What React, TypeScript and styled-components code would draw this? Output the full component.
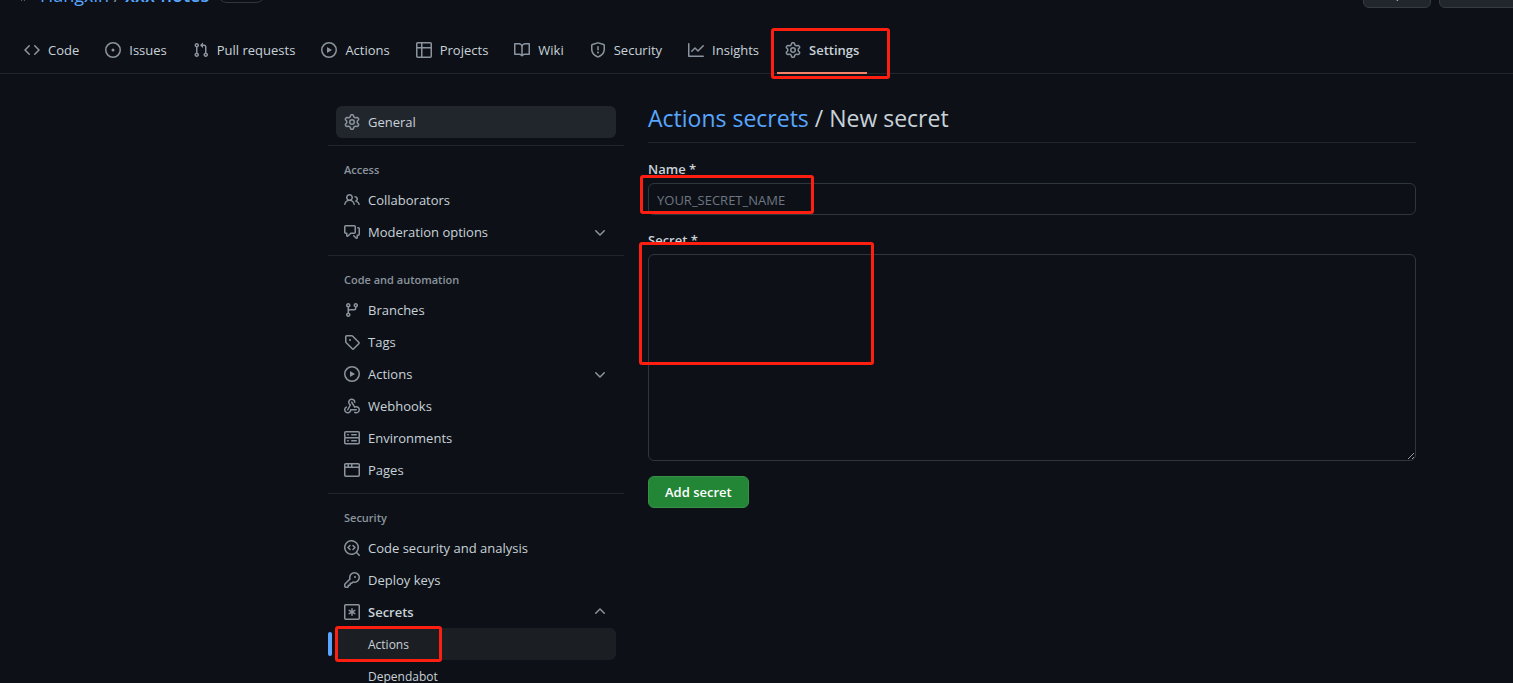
import React from "react";
import styled, { createGlobalStyle, css } from "styled-components";

const GlobalStyle = createGlobalStyle`
  *, *::before, *::after { box-sizing: border-box; }
  html { background: #0d1117; color-scheme: dark; }
  body {
    margin: 0;
    height: 100vh;
    overflow: hidden;
    background: #0d1117;
    color: #c9d1d9;
    font-family: "Segoe UI", "Open Sans", "Noto Sans", sans-serif;
    font-size: 13px;
    line-height: 20px;
  }
  a { color: inherit; text-decoration: none; }
`;

const paths = {
  code: "M4.72 3.22a.75.75 0 011.06 1.06L2.06 8l3.72 3.72a.75.75 0 11-1.06 1.06L.47 8.53a.75.75 0 010-1.06l4.25-4.25zm6.56 0a.75.75 0 10-1.06 1.06L13.94 8l-3.72 3.72a.75.75 0 101.06 1.06l4.25-4.25a.75.75 0 000-1.06l-4.25-4.25z",
  issue: "M8 9.5a1.5 1.5 0 100-3 1.5 1.5 0 000 3zM8 0a8 8 0 100 16A8 8 0 008 0zM1.5 8a6.5 6.5 0 1113 0 6.5 6.5 0 01-13 0z",
  pull: "M7.177 3.073L9.573.677A.25.25 0 0110 .854v4.792a.25.25 0 01-.427.177L7.177 3.427a.25.25 0 010-.354zM3.75 2.5a.75.75 0 100 1.5.75.75 0 000-1.5zm-2.25.75a2.25 2.25 0 113 2.122v5.256a2.251 2.251 0 11-1.5 0V5.372A2.25 2.25 0 011.5 3.25zM11 2.5h-1V4h1a1 1 0 011 1v5.628a2.251 2.251 0 101.5 0V5A2.5 2.5 0 0011 2.5zm1 10.25a.75.75 0 111.5 0 .75.75 0 01-1.5 0zM3.75 12a.75.75 0 100 1.5.75.75 0 000-1.5z",
  play: "M1.5 8a6.5 6.5 0 1113 0 6.5 6.5 0 01-13 0zM8 0a8 8 0 100 16A8 8 0 008 0zM6.379 5.227A.25.25 0 006 5.442v5.117a.25.25 0 00.379.214l4.264-2.559a.25.25 0 000-.428L6.379 5.227z",
  table: "M1.75 0h12.5C15.216 0 16 .784 16 1.75v12.5A1.75 1.75 0 0114.25 16H1.75A1.75 1.75 0 010 14.25V1.75C0 .784.784 0 1.75 0zM1.5 6.5v7.75c0 .138.112.25.25.25H5v-8H1.5zM6.5 6.5v8h7.75a.25.25 0 00.25-.25V6.5h-8zM14.5 5V1.75a.25.25 0 00-.25-.25H6.5V5h8zM5 5V1.5H1.75a.25.25 0 00-.25.25V5H5z",
  book: "M0 1.75A.75.75 0 01.75 1h4.253c1.227 0 2.317.59 3 1.501A3.744 3.744 0 0111.006 1h4.245a.75.75 0 01.75.75v10.5a.75.75 0 01-.75.75h-4.507a2.25 2.25 0 00-1.591.659l-.622.621a.75.75 0 01-1.06 0l-.622-.621A2.25 2.25 0 005.258 13H.75a.75.75 0 01-.75-.75V1.75zm8.755 3a2.25 2.25 0 012.25-2.25H14.5v9h-3.757c-.71 0-1.4.201-1.992.572l.004-7.322zm-1.504 7.324l.004-5.073-.002-2.253A2.25 2.25 0 005.003 2.5H1.5v9h3.757a3.75 3.75 0 011.994.574z",
  shield: "M7.467.133a1.75 1.75 0 011.066 0l5.25 1.68A1.75 1.75 0 0115 3.48V7c0 1.566-.32 3.182-1.303 4.682-.983 1.498-2.585 2.813-5.032 3.855a1.7 1.7 0 01-1.33 0c-2.447-1.042-4.049-2.357-5.032-3.855C1.32 10.182 1 8.566 1 7V3.48a1.75 1.75 0 011.217-1.667l5.25-1.68zm.61 1.429a.25.25 0 00-.153 0l-5.25 1.68a.25.25 0 00-.174.238V7c0 1.358.275 2.666 1.057 3.86.784 1.194 2.121 2.34 4.366 3.297a.2.2 0 00.154 0c2.245-.956 3.582-2.104 4.366-3.298C13.225 9.666 13.5 8.36 13.5 7V3.48a.25.25 0 00-.174-.237l-5.25-1.68zM9 10.5a1 1 0 11-2 0 1 1 0 012 0zm-.25-5.75a.75.75 0 10-1.5 0v3a.75.75 0 001.5 0v-3z",
  graph: "M1.5 1.75a.75.75 0 00-1.5 0v12.5c0 .414.336.75.75.75h14.5a.75.75 0 000-1.5H1.5V1.75zm14.28 2.53a.75.75 0 00-1.06-1.06L10 7.94 7.53 5.47a.75.75 0 00-1.06 0L3.22 8.72a.75.75 0 001.06 1.06L7 7.06l2.47 2.47a.75.75 0 001.06 0l5.25-5.25z",
  gear: "M7.429 1.525a6.593 6.593 0 011.142 0c.036.003.108.036.137.146l.289 1.105c.147.56.55.967.997 1.189.174.086.341.183.501.29.417.278.97.423 1.53.27l1.102-.303c.11-.03.175.016.195.046.219.31.41.641.573.989.014.031.022.11-.059.19l-.815.806c-.411.406-.562.957-.53 1.456a4.588 4.588 0 010 .582c-.032.499.119 1.05.53 1.456l.815.806c.08.08.073.159.059.19a6.494 6.494 0 01-.573.99c-.02.029-.086.074-.195.045l-1.103-.303c-.559-.153-1.112-.008-1.529.27-.16.107-.327.204-.5.29-.449.222-.851.628-.998 1.189l-.289 1.105c-.029.11-.101.143-.137.146a6.613 6.613 0 01-1.142 0c-.036-.003-.108-.037-.137-.146l-.289-1.105c-.147-.56-.55-.967-.997-1.189a4.502 4.502 0 01-.501-.29c-.417-.278-.97-.423-1.53-.27l-1.102.303c-.11.03-.175-.016-.195-.046a6.492 6.492 0 01-.573-.989c-.014-.031-.022-.11.059-.19l.815-.806c.411-.406.562-.957.53-1.456a4.587 4.587 0 010-.582c.032-.499-.119-1.05-.53-1.456l-.815-.806c-.08-.08-.073-.159-.059-.19a6.44 6.44 0 01.573-.99c.02-.029.086-.075.195-.045l1.103.303c.559.153 1.112.008 1.529-.27.16-.107.327-.204.5-.29.449-.222.851-.628.998-1.189l.289-1.105c.029-.11.101-.143.137-.146zM8 0c-.236 0-.47.01-.701.03-.743.065-1.29.615-1.458 1.261l-.29 1.106c-.017.066-.078.158-.211.224a5.994 5.994 0 00-.668.386c-.123.082-.233.09-.3.071L3.27 2.776c-.644-.177-1.392.02-1.82.63a7.977 7.977 0 00-.704 1.217c-.315.675-.111 1.422.363 1.891l.815.806c.05.048.098.147.088.294a6.084 6.084 0 000 .772c.01.147-.038.246-.088.294l-.815.806c-.474.469-.678 1.216-.363 1.891.2.428.436.835.704 1.218.428.609 1.176.806 1.82.63l1.103-.303c.066-.019.176-.011.299.071.213.143.436.272.668.386.133.066.194.158.212.224l.289 1.106c.169.646.715 1.196 1.458 1.26a8.094 8.094 0 001.402 0c.743-.064 1.29-.614 1.458-1.26l.29-1.106c.017-.066.078-.158.211-.224a5.98 5.98 0 00.668-.386c.123-.082.233-.09.3-.071l1.102.302c.644.177 1.392-.02 1.82-.63.268-.382.505-.789.704-1.217.315-.675.111-1.422-.364-1.891l-.814-.806c-.05-.048-.098-.147-.088-.294a6.1 6.1 0 000-.772c-.01-.147.039-.246.088-.294l.814-.806c.475-.469.679-1.216.364-1.891a7.992 7.992 0 00-.704-1.218c-.428-.609-1.176-.806-1.82-.63l-1.103.303c-.066.019-.176.011-.299-.071a5.991 5.991 0 00-.668-.386c-.133-.066-.194-.158-.212-.224L10.16 1.29C9.99.645 9.444.095 8.701.031A8.094 8.094 0 008 0zm1.5 8a1.5 1.5 0 11-3 0 1.5 1.5 0 013 0zM11 8a3 3 0 11-6 0 3 3 0 016 0z",
  people: "M5.5 3.5a2 2 0 100 4 2 2 0 000-4zM2 5.5a3.5 3.5 0 115.898 2.549 5.507 5.507 0 013.034 4.084.75.75 0 11-1.482.235 4.001 4.001 0 00-7.9 0 .75.75 0 01-1.482-.236A5.507 5.507 0 013.102 8.05 3.49 3.49 0 012 5.5zM11 4a.75.75 0 100 1.5 1.5 1.5 0 01.666 2.844.75.75 0 00-.416.672v.352a.75.75 0 00.574.73c1.2.289 2.162 1.2 2.522 2.372a.75.75 0 101.434-.44 5.01 5.01 0 00-2.56-3.012A3 3 0 0011 4z",
  discussion: "M1.5 2.75a.25.25 0 01.25-.25h8.5a.25.25 0 01.25.25v5.5a.25.25 0 01-.25.25h-3.5a.75.75 0 00-.53.22L3.5 11.44V9.25a.75.75 0 00-.75-.75h-1a.25.25 0 01-.25-.25v-5.5zM1.75 1A1.75 1.75 0 000 2.75v5.5C0 9.216.784 10 1.75 10H2v1.543a1.457 1.457 0 002.487 1.03L7.061 10h3.189A1.75 1.75 0 0012 8.25v-5.5A1.75 1.75 0 0010.25 1h-8.5zM14.5 4.75a.25.25 0 00-.25-.25h-.5a.75.75 0 110-1.5h.5c.966 0 1.75.784 1.75 1.75v5.5A1.75 1.75 0 0114.25 12H14v1.543a1.457 1.457 0 01-2.487 1.03L9.22 12.28a.75.75 0 111.06-1.06l2.22 2.22v-2.19a.75.75 0 01.75-.75h1a.25.25 0 00.25-.25v-5.5z",
  branch: "M11.75 2.5a.75.75 0 100 1.5.75.75 0 000-1.5zm-2.25.75a2.25 2.25 0 113 2.122V6A2.5 2.5 0 0110 8.5H6a1 1 0 00-1 1v1.128a2.251 2.251 0 11-1.5 0V5.372a2.25 2.25 0 111.5 0v1.836A2.492 2.492 0 016 7h4a1 1 0 001-1v-.628A2.25 2.25 0 019.5 3.25zM4.25 12a.75.75 0 100 1.5.75.75 0 000-1.5zM3.5 3.25a.75.75 0 111.5 0 .75.75 0 01-1.5 0z",
  tag: "M2.5 7.775V2.75a.25.25 0 01.25-.25h5.025a.25.25 0 01.177.073l6.25 6.25a.25.25 0 010 .354l-5.025 5.025a.25.25 0 01-.354 0l-6.25-6.25a.25.25 0 01-.073-.177zm-1.5 0V2.75C1 1.784 1.784 1 2.75 1h5.025c.464 0 .91.184 1.238.513l6.25 6.25a1.75 1.75 0 010 2.474l-5.026 5.026a1.75 1.75 0 01-2.474 0l-6.25-6.25A1.75 1.75 0 011 7.775zM6 5a1 1 0 100 2 1 1 0 000-2z",
  webhook: "M5.5 4.25a2.25 2.25 0 014.5 0 .75.75 0 001.5 0 3.75 3.75 0 10-6.14 2.889l-2.272 4.258a.75.75 0 001.324.706L7 7.25a.75.75 0 00-.309-1.015A2.25 2.25 0 015.5 4.25zM7.364 3.607a.75.75 0 011.03.257l2.608 4.349a3.75 3.75 0 11-.628 6.785.75.75 0 01.752-1.299 2.25 2.25 0 10-.033-3.88.75.75 0 01-1.03-.256L7.107 4.636a.75.75 0 01.257-1.03zM2.9 8.776A.75.75 0 012.625 9.8 2.25 2.25 0 106 11.75a.75.75 0 01.75-.751h5.5a.75.75 0 010 1.5H7.425a3.751 3.751 0 11-5.55-3.998.75.75 0 011.024.274z",
  server: "M1.75 1A1.75 1.75 0 000 2.75v4c0 .372.116.717.314 1a1.742 1.742 0 00-.314 1v4c0 .966.784 1.75 1.75 1.75h12.5A1.75 1.75 0 0016 12.75v-4c0-.372-.116-.717-.314-1 .198-.283.314-.628.314-1v-4A1.75 1.75 0 0014.25 1H1.75zm0 7.5a.25.25 0 00-.25.25v4c0 .138.112.25.25.25h12.5a.25.25 0 00.25-.25v-4a.25.25 0 00-.25-.25H1.75zM1.5 2.75a.25.25 0 01.25-.25h12.5a.25.25 0 01.25.25v4a.25.25 0 01-.25.25H1.75a.25.25 0 01-.25-.25v-4zm5.5 2A.75.75 0 017.75 4h4.5a.75.75 0 010 1.5h-4.5A.75.75 0 017 4.75zM7.75 10a.75.75 0 000 1.5h4.5a.75.75 0 000-1.5h-4.5zM3 4.75A.75.75 0 013.75 4h.5a.75.75 0 010 1.5h-.5A.75.75 0 013 4.75zM3.75 10a.75.75 0 000 1.5h.5a.75.75 0 000-1.5h-.5z",
  browser: "M0 2.75C0 1.784.784 1 1.75 1h12.5c.966 0 1.75.784 1.75 1.75v10.5A1.75 1.75 0 0114.25 15H1.75A1.75 1.75 0 010 13.25V2.75zm1.75-.25a.25.25 0 00-.25.25V4.5h2v-2H1.75zM5 2.5v2h2v-2H5zm3.5 0v2h6V2.75a.25.25 0 00-.25-.25H8.5zm6 3.5h-13v7.25c0 .138.112.25.25.25h12.5a.25.25 0 00.25-.25V6z",
  codescan: "M8.47 4.97a.75.75 0 000 1.06L9.94 7.5 8.47 8.97a.75.75 0 101.06 1.06l2-2a.75.75 0 000-1.06l-2-2a.75.75 0 00-1.06 0zM6.53 6.03a.75.75 0 00-1.06-1.06l-2 2a.75.75 0 000 1.06l2 2a.75.75 0 101.06-1.06L5.06 7.5l1.47-1.47zM12.246 13.307a7.5 7.5 0 111.06-1.06l2.474 2.473a.75.75 0 11-1.06 1.06l-2.474-2.473zM1.5 7.5a6 6 0 1110.386 4.094.75.75 0 00-.292.293A6 6 0 011.5 7.5z",
  key: "M6.5 5.5a4 4 0 112.731 3.795.75.75 0 00-.768.18L7.44 10.5H6.25a.75.75 0 00-.75.75v1.19l-.06.06H4.25a.75.75 0 00-.75.75v1.19l-.06.06H1.75a.25.25 0 01-.25-.25v-1.69l5.024-5.023a.75.75 0 00.181-.768A3.995 3.995 0 016.5 5.5zm4-5.5a5.5 5.5 0 00-5.348 6.788L.22 11.72a.75.75 0 00-.22.53v2C0 15.216.784 16 1.75 16h2a.75.75 0 00.53-.22l.5-.5a.75.75 0 00.22-.53V14h.75a.75.75 0 00.53-.22l.5-.5a.75.75 0 00.22-.53V12h.75a.75.75 0 00.53-.22l.932-.932A5.5 5.5 0 1010.5 0zm.5 6a1 1 0 100-2 1 1 0 000 2z",
  asterisk: "M1.75 0h12.5C15.216 0 16 .784 16 1.75v12.5A1.75 1.75 0 0114.25 16H1.75A1.75 1.75 0 010 14.25V1.75C0 .784.784 0 1.75 0zM1.5 1.75v12.5c0 .138.112.25.25.25h12.5a.25.25 0 00.25-.25V1.75a.25.25 0 00-.25-.25H1.75a.25.25 0 00-.25.25zM8 4a.75.75 0 01.75.75V6.7l1.69-.97a.75.75 0 01.75 1.3L9.5 8l1.69.97a.75.75 0 01-.75 1.3L8.75 9.3v1.95a.75.75 0 01-1.5 0V9.3l-1.69.97a.75.75 0 01-.75-1.3L6.5 8l-1.69-.97a.75.75 0 01.75-1.3l1.69.97V4.75A.75.75 0 018 4z",
  repo: "M2 2.5A2.5 2.5 0 014.5 0h8.75a.75.75 0 01.75.75v12.5a.75.75 0 01-.75.75h-2.5a.75.75 0 110-1.5h1.75v-2h-8a1 1 0 00-.714 1.7.75.75 0 01-1.072 1.05A2.495 2.495 0 012 11.5v-9zm10.5-1V9h-8c-.356 0-.694.074-1 .208V2.5a1 1 0 011-1h8zM5 12.25v3.25a.25.25 0 00.4.2l1.45-1.087a.25.25 0 01.3 0L8.6 15.7a.25.25 0 00.4-.2v-3.25a.25.25 0 00-.25-.25h-3.5a.25.25 0 00-.25.25z",
  down: "M12.78 6.22a.75.75 0 010 1.06l-4.25 4.25a.75.75 0 01-1.06 0L3.22 7.28a.75.75 0 011.06-1.06L8 9.94l3.72-3.72a.75.75 0 011.06 0z",
  up: "M3.22 9.78a.75.75 0 010-1.06l4.25-4.25a.75.75 0 011.06 0l4.25 4.25a.75.75 0 01-1.06 1.06L8 6.06 4.28 9.78a.75.75 0 01-1.06 0z",
};

type IconName = keyof typeof paths;

const Svg = styled.svg`
  display: block;
  flex: none;
  fill: #8b949e;
`;

const Icon = ({ name }: { name: IconName }) => (
  <Svg width="16" height="16" viewBox="0 0 16 16" aria-hidden="true">
    <path fillRule="evenodd" d={paths[name]} />
  </Svg>
);

/* Red frame laid over a part of the page to call it out */
const Marker = styled.span<{ $top: number; $left: number; $width: number; $height: number }>`
  position: absolute;
  z-index: 2;
  top: ${(p) => p.$top}px;
  left: ${(p) => p.$left}px;
  width: ${(p) => p.$width}px;
  height: ${(p) => p.$height}px;
  border: 3px solid #ff1f10;
  border-radius: 3px;
  pointer-events: none;
`;

const RepoHeader = styled.header`
  display: flex;
  align-items: flex-end;
  justify-content: space-between;
  height: 26px;
  padding: 0 0 18px 16px;
  overflow: hidden;
`;

const RepoTitle = styled.div`
  display: flex;
  align-items: center;
  gap: 8px;
  height: 30px;
  color: #8b949e;
`;

const RepoPath = styled.span`
  padding-top: 4px;
  font-size: 18px;
  line-height: 30px;
  white-space: nowrap;
`;

const RepoLink = styled.a<{ $bold?: boolean }>`
  color: #58a6ff;
  font-weight: ${(p) => (p.$bold ? 600 : 400)};
`;

const Visibility = styled.span`
  height: 20px;
  padding: 0 8px;
  border: 1px solid #30363d;
  border-radius: 10px;
  font-size: 11px;
  line-height: 18px;
`;

const HeaderActions = styled.div`
  display: flex;
  gap: 8px;
  margin-right: -9px;
`;

const HeaderButton = styled.button`
  height: 28px;
  padding: 0 16px;
  border: 1px solid #363b42;
  border-radius: 6px;
  background: #21262d;
  color: #c9d1d9;
  font: inherit;
  font-size: 12px;
`;

const Tabs = styled.nav`
  display: flex;
  gap: 10px;
  height: 48px;
  padding: 0 16px;
  border-bottom: 1px solid #21262d;
`;

const Tab = styled.a<{ $current?: boolean }>`
  position: relative;
  display: flex;
  align-items: center;
  gap: 8px;
  height: 48px;
  padding: 0 8px;
  white-space: nowrap;
  ${(p) =>
    p.$current &&
    css`
      font-weight: 600;
      border-bottom: 2px solid #f78166;
      padding-top: 2px;
    `}
`;

const Layout = styled.div`
  display: flex;
  align-items: flex-start;
  gap: 24px;
  padding: 24px 97px 0 328px;
`;

const Sidebar = styled.aside`
  flex: none;
  width: 296px;
`;

const NavList = styled.ul`
  margin: 0;
  padding: 8px 8px 7px;
  list-style: none;
  & + & { border-top: 1px solid #21262d; }
`;

const GroupTitle = styled.li`
  height: 30px;
  padding: 6px 8px;
  font-size: 11px;
  line-height: 20px;
  font-weight: 600;
  color: #8b949e;
`;

const NavEntry = styled.li<{ $active?: boolean }>`
  position: relative;
  ${(p) =>
    p.$active &&
    css`
      &::before {
        content: "";
        position: absolute;
        top: 4px;
        left: -8px;
        width: 4px;
        height: 24px;
        border-radius: 6px;
        background: #58a6ff;
      }
    `}
`;

const NavLink = styled.a<{ $fill?: string; $sub?: boolean; $bold?: boolean }>`
  display: flex;
  align-items: center;
  gap: 8px;
  height: 32px;
  padding: ${(p) => (p.$sub ? "2px 8px 0 32px" : "0 8px")};
  border-radius: 6px;
  background: ${(p) => p.$fill || "transparent"};
  font-size: ${(p) => (p.$sub ? 12 : 13)}px;
  font-weight: ${(p) => (p.$bold ? 600 : 400)};
  svg:nth-of-type(2) { margin-left: auto; }
`;

const Main = styled.main`
  flex: 1;
  min-width: 0;
`;

const Heading = styled.h1`
  margin: 0 0 16px;
  padding: 2px 0 6px;
  border-bottom: 1px solid #21262d;
  font-size: 23px;
  line-height: 36px;
  font-weight: 400;
  a { color: #58a6ff; }
`;

const Field = styled.div`
  position: relative;
  display: flex;
  flex-direction: column;
  gap: 4px;
  margin-bottom: 15px;
`;

const Label = styled.label`
  height: 20px;
  font-weight: 600;
`;

const control = css`
  display: block;
  width: 100%;
  border: 1px solid #30363d;
  border-radius: 6px;
  background: #0d1117;
  color: #c9d1d9;
  font: inherit;
  outline: none;
`;

const TextInput = styled.input`
  ${control}
  height: 32px;
  padding: 6px 8px 4px;
  &::placeholder { color: #6e7681; opacity: 1; }
`;

const TextArea = styled.textarea`
  ${control}
  height: 207px;
  padding: 8px;
`;

const SubmitButton = styled.button`
  height: 32px;
  padding: 0 16px;
  border: 1px solid #388f47;
  border-radius: 6px;
  background: #238636;
  color: #fff;
  font: inherit;
  font-weight: 600;
`;

const tabs: { label: string; icon: IconName }[] = [
  { label: "Code", icon: "code" },
  { label: "Issues", icon: "issue" },
  { label: "Pull requests", icon: "pull" },
  { label: "Actions", icon: "play" },
  { label: "Projects", icon: "table" },
  { label: "Wiki", icon: "book" },
  { label: "Security", icon: "shield" },
  { label: "Insights", icon: "graph" },
];

type Item = { label: string; icon: IconName; chevron?: "up" | "down"; fill?: string; bold?: boolean };

const groups: { title?: string; items: Item[] }[] = [
  { items: [{ label: "General", icon: "gear", fill: "#21262d" }] },
  {
    title: "Access",
    items: [
      { label: "Collaborators", icon: "people" },
      { label: "Moderation options", icon: "discussion", chevron: "down" },
    ],
  },
  {
    title: "Code and automation",
    items: [
      { label: "Branches", icon: "branch" },
      { label: "Tags", icon: "tag" },
      { label: "Actions", icon: "play", chevron: "down" },
      { label: "Webhooks", icon: "webhook" },
      { label: "Environments", icon: "server" },
      { label: "Pages", icon: "browser" },
    ],
  },
  {
    title: "Security",
    items: [
      { label: "Code security and analysis", icon: "codescan" },
      { label: "Deploy keys", icon: "key" },
      { label: "Secrets", icon: "asterisk", chevron: "up", bold: true },
    ],
  },
];

export default function App() {
  return (
    <>
      <GlobalStyle />
      <RepoHeader>
        <RepoTitle>
          <Icon name="repo" />
          <RepoPath>
            <RepoLink href="#">Hangxin</RepoLink> / <RepoLink href="#" $bold>xxx-notes</RepoLink>
          </RepoPath>
          <Visibility>Public</Visibility>
        </RepoTitle>
        <HeaderActions>
          <HeaderButton type="button">Unpin</HeaderButton>
          <HeaderButton type="button">Unwatch</HeaderButton>
        </HeaderActions>
      </RepoHeader>
      <Tabs aria-label="Repository">
        {tabs.map((t) => (
          <Tab key={t.label} href="#">
            <Icon name={t.icon} />
            {t.label}
          </Tab>
        ))}
        <Tab href="#" $current aria-current="page">
          <Icon name="gear" />
          Settings
          <Marker $top={2} $left={-6} $width={119} $height={51} />
        </Tab>
      </Tabs>
      <Layout>
        <Sidebar>
          {groups.map((g, i) => (
            <NavList key={i}>
              {g.title && <GroupTitle>{g.title}</GroupTitle>}
              {g.items.map((item) => (
                <NavEntry key={item.label}>
                  <NavLink href="#" $fill={item.fill} $bold={item.bold}>
                    <Icon name={item.icon} />
                    {item.label}
                    {item.chevron && <Icon name={item.chevron} />}
                  </NavLink>
                </NavEntry>
              ))}
              {g.title === "Security" && (
                <>
                  <NavEntry $active>
                    <NavLink href="#" $sub $fill="#1b1f23" aria-current="page">Actions</NavLink>
                    <Marker $top={-2} $left={-1} $width={107} $height={36} />
                  </NavEntry>
                  <NavEntry>
                    <NavLink href="#" $sub>Dependabot</NavLink>
                  </NavEntry>
                </>
              )}
            </NavList>
          ))}
        </Sidebar>
        <Main>
          <Heading>
            <a href="#">Actions secrets</a> / New secret
          </Heading>
          <form onSubmit={(e) => e.preventDefault()}>
            <Field>
              <Label htmlFor="name">Name *</Label>
              <TextInput id="name" placeholder="YOUR_SECRET_NAME" />
              <Marker $top={16} $left={-8} $width={174} $height={39} />
            </Field>
            <Field>
              <Label htmlFor="secret">Secret *</Label>
              <TextArea id="secret" />
              <Marker $top={12} $left={-9} $width={235} $height={123} />
            </Field>
            <SubmitButton type="submit">Add secret</SubmitButton>
          </form>
        </Main>
      </Layout>
    </>
  );
}
